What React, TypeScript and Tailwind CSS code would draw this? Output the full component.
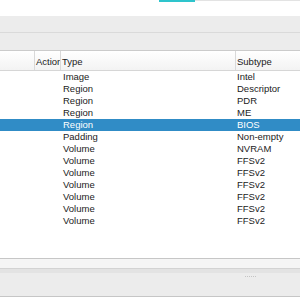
import React from "react";

type Row = { type: string; subtype: string };

const rows: Row[] = [
  { type: "Image", subtype: "Intel" },
  { type: "Region", subtype: "Descriptor" },
  { type: "Region", subtype: "PDR" },
  { type: "Region", subtype: "ME" },
  { type: "Region", subtype: "BIOS" },
  { type: "Padding", subtype: "Non-empty" },
  { type: "Volume", subtype: "NVRAM" },
  { type: "Volume", subtype: "FFSv2" },
  { type: "Volume", subtype: "FFSv2" },
  { type: "Volume", subtype: "FFSv2" },
  { type: "Volume", subtype: "FFSv2" },
  { type: "Volume", subtype: "FFSv2" },
  { type: "Volume", subtype: "FFSv2" },
];

const selected = 4;

export default function App() {
  return (
    <div className="flex h-[300px] w-[300px] flex-col overflow-hidden bg-white font-['Liberation_Sans',Arial,sans-serif] text-[9.5px] text-[#1b1b1b]">
      {/* tab strip */}
      <div className="flex h-[16px] shrink-0">
        <div className="w-[159px]" />
        <div className="h-[2px] w-[36px] bg-[#2ec4cc]" />
        <div className="h-px flex-1 bg-[#e3e3e3]" />
      </div>

      {/* toolbars */}
      <div className="h-[17px] shrink-0 border-b border-[#dadada] bg-[#ececec]" />
      <div className="h-[18px] shrink-0 border-b border-[#cbcbcb] bg-[#ececec]" />

      {/* header */}
      <div className="flex h-[20px] shrink-0 items-center border-b border-[#d6d6d6] bg-gradient-to-b from-white to-[#f3f3f3] leading-none">
        <div className="h-full w-[35px] border-r border-[#d9d9d9]" />
        <div className="flex h-full w-[26px] items-center overflow-hidden whitespace-nowrap border-r border-[#d9d9d9] pl-px pt-[2px]">
          Action
        </div>
        <div className="flex h-full w-[175px] items-center border-r border-[#d9d9d9] pl-[1px] pt-[2px]">Type</div>
        <div className="flex h-full flex-1 items-center pl-[1px] pt-[2px]">Subtype</div>
      </div>

      {/* rows */}
      <div className="flex shrink-0 flex-col">
        {rows.map((r, i) => (
          <div
            key={i}
            className={`flex h-[12px] items-center leading-none ${i === selected ? "bg-[#308cc6] text-white" : ""}`}
          >
            <div className="w-[63px]" />
            <div className="w-[174px]">{r.type}</div>
            <div className="flex-1">{r.subtype}</div>
          </div>
        ))}
      </div>

      <div className="flex-1" />

      {/* bottom panel */}
      <div className="flex h-[39px] shrink-0 flex-col border-y border-[#c6c6c6] bg-[#ececec]">
        <div className="h-[9px] bg-[#f5f5f5]" />
        <div className="h-px bg-[#d3d3d3]" />
        <div className="h-[4px] bg-[#e3e3e3]" />
        <div className="flex flex-1 justify-end pr-[44px] pt-[3px]">
          <div className="flex gap-[1px]">
            <div className="h-px w-px bg-[#c4c4c4]" />
            <div className="h-px w-px bg-[#c4c4c4]" />
            <div className="h-px w-px bg-[#c4c4c4]" />
            <div className="h-px w-px bg-[#c4c4c4]" />
            <div className="h-px w-px bg-[#c4c4c4]" />
            <div className="h-px w-px bg-[#c4c4c4]" />
          </div>
        </div>
      </div>
      <div className="h-[3px] shrink-0" />
    </div>
  );
}
